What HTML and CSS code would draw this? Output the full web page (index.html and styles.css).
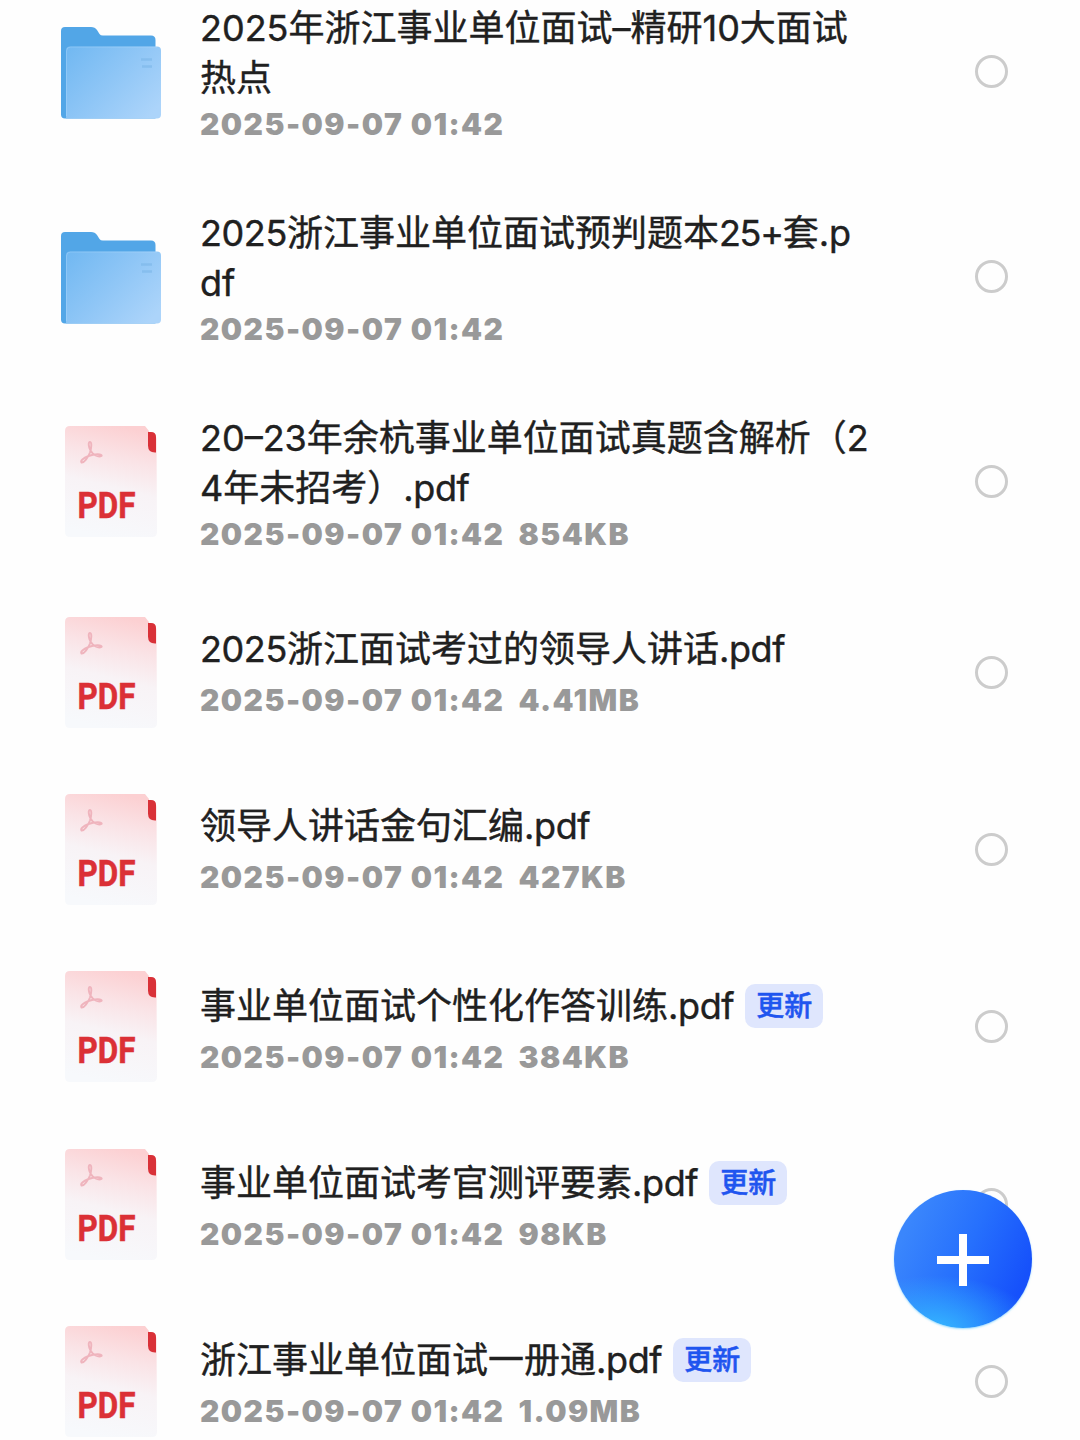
FILE: index.html
```
<!DOCTYPE html>
<html lang="zh-CN">
<head>
    <meta charset="utf-8">
    <title>文件列表</title>
    <link rel="stylesheet" href="styles.css">
</head>
<body>
    <!-- shared icons -->
    <svg class="defs" width="0" height="0">
        <defs>
            <linearGradient id="folderFront" x1="0" y1="0.1" x2="1" y2="0.8">
                <stop offset="0" stop-color="#73b9f2" />
                <stop offset="0.5" stop-color="#8fc6f6" />
                <stop offset="1" stop-color="#acd4fa" />
            </linearGradient>
            <linearGradient id="page" x1="0.62" y1="0" x2="0.42" y2="1">
                <stop offset="0" stop-color="#fcd0d2" />
                <stop offset="0.28" stop-color="#fae3e6" />
                <stop offset="0.55" stop-color="#f8f3f6" />
                <stop offset="1" stop-color="#f7f9fc" />
            </linearGradient>
        </defs>
        <symbol id="folder" viewBox="0 0 100 92">
            <path fill="#52a6e7" d="M4 0H30Q34 0 36 3L38.500 7Q39.500 8.500 42 8.500H90Q94.500 8.500 94.500 13V91.500H4Q0 91.500 0 87.500V4Q0 0 4 0Z" />
            <path fill="url(#folderFront)" d="M9 19.500H96Q100 19.500 100 23.500V87.500Q100 91.500 96 91.500H5V23.500Q5 19.500 9 19.500Z" />
            <path fill="none" stroke="#c0e1ff" stroke-opacity="0.3" d="M5.500 89V24Q5.500 20 9.500 20H96" />
            <path stroke="#7bb5e8" stroke-width="2.500" stroke-opacity="0.6" d="M80 32.500H91M81 39.500H91" />
        </symbol>
        <symbol id="pdf" viewBox="0 0 92 111">
            <path fill="url(#page)" d="M5 0H80L84 5V6Q91 6 91.500 13L92 106Q92 111 87 111H5Q0 111 0 106V5Q0 0 5 0Z" />
            <path fill="#d93138" d="M83 6H86Q91 6 91 11V26.500H90Q83 26.500 83 19.500Z" />
            <path fill="none" stroke="#efb4bd" stroke-width="1.900" stroke-linejoin="round" d="M25 16C23 16 23.500 21 25.500 24.500C28 29 33 31.500 36.500 30C38 28 30 27.500 23.500 30C18 32 15 35 16.500 36.500C19 37 23 31.500 25 26.500C26.500 22 27 16 25 16Z" />
            <text class="pdf-label" x="12.500" y="92" textLength="58" lengthAdjust="spacingAndGlyphs">PDF</text>
        </symbol>
    </svg>

    <div class="screen">
        <div class="list">
            <div class="item tall">
                <svg class="icon folder"><use href="#folder" /></svg>
                <div class="info">
                    <div class="name">2025年浙江事业单位面试–精研10大面试<br>热点</div>
                    <div class="meta"><span>2025-09-07 01:42</span></div>
                </div>
                <div class="check"></div>
            </div>
            <div class="item tall">
                <svg class="icon folder"><use href="#folder" /></svg>
                <div class="info">
                    <div class="name"><span class="num">2025</span>浙江事业单位面试预判题本<span class="num plus">25+</span>套.p<br>df</div>
                    <div class="meta"><span>2025-09-07 01:42</span></div>
                </div>
                <div class="check"></div>
            </div>
            <div class="item tall">
                <svg class="icon pdf"><use href="#pdf" /></svg>
                <div class="info">
                    <div class="name">20–23年余杭事业单位面试真题含解析（2<br>4年未招考）<span class="num">.pdf</span></div>
                    <div class="meta"><span>2025-09-07 01:42</span><span>854KB</span></div>
                </div>
                <div class="check"></div>
            </div>
            <div class="item">
                <svg class="icon pdf"><use href="#pdf" /></svg>
                <div class="info">
                    <div class="name"><span class="num">2025</span>浙江面试考过的领导人讲话<span class="num">.pdf</span></div>
                    <div class="meta"><span>2025-09-07 01:42</span><span>4.41MB</span></div>
                </div>
                <div class="check"></div>
            </div>
            <div class="item">
                <svg class="icon pdf"><use href="#pdf" /></svg>
                <div class="info">
                    <div class="name">领导人讲话金句汇编<span class="num">.pdf</span></div>
                    <div class="meta"><span>2025-09-07 01:42</span><span>427KB</span></div>
                </div>
                <div class="check"></div>
            </div>
            <div class="item updated">
                <svg class="icon pdf"><use href="#pdf" /></svg>
                <div class="info">
                    <div class="name">事业单位面试个性化作答训练<span class="num">.pdf</span><span class="tag">更新</span></div>
                    <div class="meta"><span>2025-09-07 01:42</span><span>384KB</span></div>
                </div>
                <div class="check"></div>
            </div>
            <div class="item updated">
                <svg class="icon pdf"><use href="#pdf" /></svg>
                <div class="info">
                    <div class="name">事业单位面试考官测评要素<span class="num">.pdf</span><span class="tag">更新</span></div>
                    <div class="meta"><span>2025-09-07 01:42</span><span>98KB</span></div>
                </div>
                <div class="check"></div>
            </div>
            <div class="item updated">
                <svg class="icon pdf"><use href="#pdf" /></svg>
                <div class="info">
                    <div class="name">浙江事业单位面试一册通<span class="num">.pdf</span><span class="tag">更新</span></div>
                    <div class="meta"><span>2025-09-07 01:42</span><span>1.09MB</span></div>
                </div>
                <div class="check"></div>
            </div>
        </div>
        <div class="add">
            <svg width="54" height="54" viewBox="0 0 54 54">
                <path fill="#fff" d="M23 1H31V23H53V31H31V53H23V31H1V23H23Z" />
            </svg>
        </div>
    </div>
</body>
</html>
```
FILE: styles.css
```
body {
    margin: 0;
    background-color: #fefefe;
    font-family: Inter, "Noto Sans CJK SC", sans-serif;
}
.defs {
    position: absolute;
}
.screen {
    position: relative;
    height: 1440px;
    overflow: hidden;
}
/* list is scrolled a little, the first row is cut at the top */
.list {
    margin-top: -31px;
}
.item {
    display: flex;
    align-items: center;
    box-sizing: border-box;
    height: 177.2px;
    padding: 0 72px 0 61px;
}
.item.tall {
    height: 205px;
}
.icon {
    flex: none;
    margin-right: 39px;
}
.icon.folder {
    width: 100px;
    height: 92px;
    margin-top: 3px;
}
.icon.pdf {
    width: 92px;
    height: 111px;
    margin-left: 4px;
    margin-right: 43px;
}
.pdf-label {
    font-family: Roboto, sans-serif;
    font-size: 37px;
    font-weight: 700;
    fill: #db3036;
    stroke: #db3036;
    stroke-width: 0.5px;
}
.info {
    flex: 1;
    min-width: 0;
    padding-bottom: 6px;
}
.tall .info {
    padding-bottom: 1px;
}
.updated .info {
    padding-bottom: 1px;
}
.name {
    color: #202020;
    font-size: 36px;
    line-height: 50px;
    white-space: nowrap;
    -webkit-text-stroke: 0.4px #202020;
}
.num {
    letter-spacing: -0.4px;
}
.num.plus {
    letter-spacing: -1.3px;
}
.meta {
    display: flex;
    gap: 14px;
    margin-top: 11px;
    color: #999;
    font-size: 30px;
    font-weight: 900;
    line-height: 30px;
    letter-spacing: 1.45px;
    white-space: nowrap;
}
.tall .meta {
    margin-top: 6px;
}
.updated .name {
    display: flex;
    align-items: center;
}
.tag {
    box-sizing: border-box;
    width: 78px;
    height: 44px;
    margin-left: 11px;
    border-radius: 10px;
    background-color: #dfe6fd;
    color: #1f55ef;
    font-size: 28px;
    font-weight: 500;
    line-height: 44px;
    text-align: center;
    -webkit-text-stroke: 0.5px #1f55ef;
}
.check {
    flex: none;
    box-sizing: border-box;
    width: 33px;
    height: 33px;
    border: 3px solid #ccc;
    border-radius: 50%;
}
/* floating add button */
.add {
    position: absolute;
    right: 48px;
    bottom: 112px;
    display: flex;
    align-items: center;
    justify-content: center;
    box-sizing: border-box;
    width: 138px;
    height: 138px;
    padding: 2px 1px 0 0;
    border-radius: 50%;
    background: radial-gradient(ellipse 75% 40% at 30% 102%, #35b8ff 0%, rgba(53, 168, 255, 0) 100%), linear-gradient(115deg, #3a86fc 15%, #2670fd 50%, #1651fb 85%);
    box-shadow: 0 1px 2px rgba(90, 200, 255, 0.6);
}
```
